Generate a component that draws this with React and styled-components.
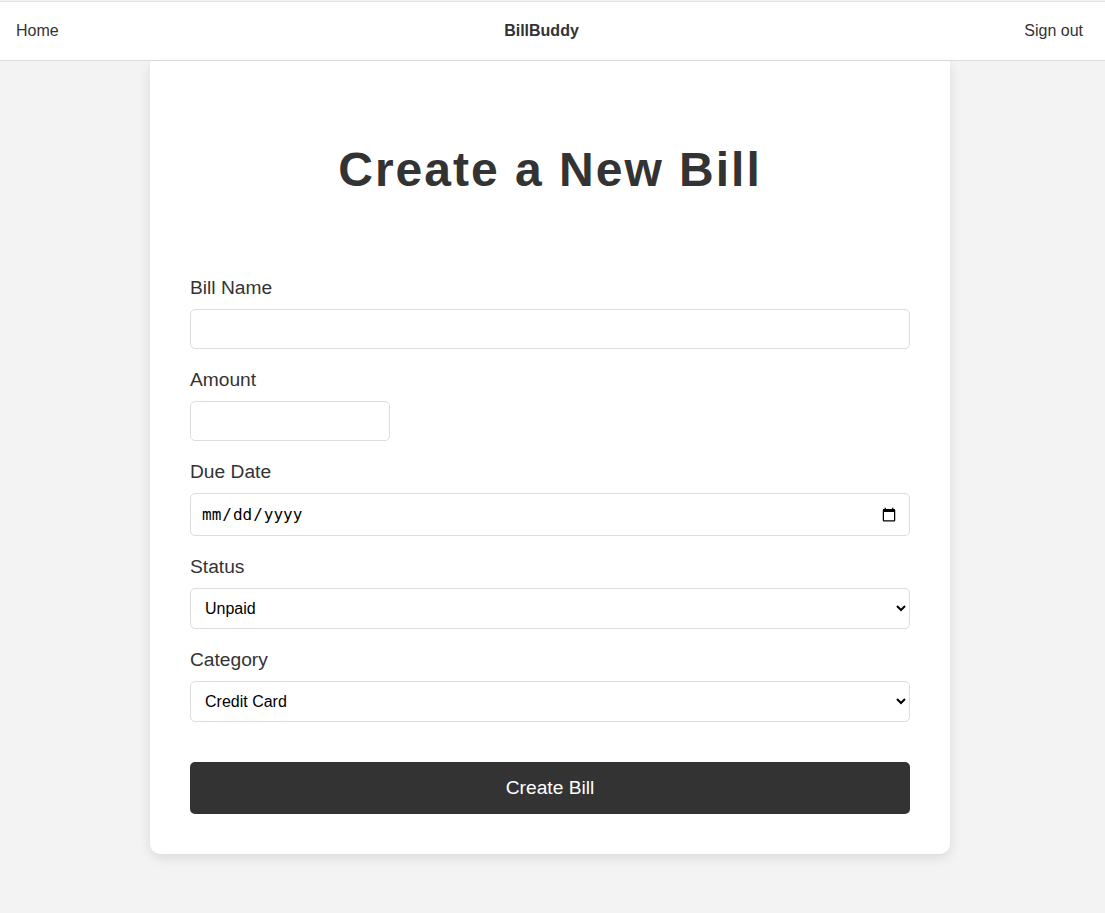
import React, { useState } from 'react'
import styled, { createGlobalStyle } from 'styled-components'

const GlobalStyle = createGlobalStyle`
  body {
    margin: 0;
    background: #f3f3f3;
    font-family: "Liberation Sans", Arial, sans-serif;
    color: #333;
  }
`

function App() {
  const [values, setValues] = useState({ name: '', amount: '', dueDate: '', status: 'Unpaid', category: 'Credit Card' })

  const handleChange = (e) => setValues({ ...values, [e.target.name]: e.target.value })

  return (
    <>
      <GlobalStyle />
      <NavBar>
        <NavLink href="#">Home</NavLink>
        <Brand>BillBuddy</Brand>
        <NavLink href="#">Sign out</NavLink>
      </NavBar>
      <Page>
        <Card>
          <Title>Create a New Bill</Title>
          <Form onSubmit={(e) => e.preventDefault()}>
            <Field>
              <Label>Bill Name</Label>
              <Input type="text" name="name" value={values.name} onChange={handleChange} />
            </Field>
            <Field>
              <Label>Amount</Label>
              <Input type="number" name="amount" $narrow value={values.amount} onChange={handleChange} />
            </Field>
            <Field>
              <Label>Due Date</Label>
              <DateInput type="date" name="dueDate" value={values.dueDate} onChange={handleChange} />
            </Field>
            <Field>
              <Label>Status</Label>
              <Select name="status" value={values.status} onChange={handleChange}>
                <option>Unpaid</option>
                <option>Paid</option>
              </Select>
            </Field>
            <Field>
              <Label>Category</Label>
              <Select name="category" value={values.category} onChange={handleChange}>
                <option>Credit Card</option>
                <option>Utilities</option>
                <option>Rent</option>
                <option>Other</option>
              </Select>
            </Field>
            <SubmitButton type="submit">Create Bill</SubmitButton>
          </Form>
        </Card>
      </Page>
    </>
  )
}

export default App

const NavBar = styled.nav`
  display: flex;
  justify-content: space-between;
  align-items: center;
  height: 58px;
  margin-top: 1px;
  padding: 0 22px 0 16px;
  background: #fff;
  border-top: 1px solid #e2e2e2;
  border-bottom: 1px solid #ddd;
  font-size: 16px;
`

const NavLink = styled.a`
  color: #333;
  text-decoration: none;
`

const Brand = styled.span`
  font-weight: bold;
  color: #333;
`

const Page = styled.div`
  padding-right: 5px;
  padding-bottom: 58px;
`

const Card = styled.main`
  width: 800px;
  box-sizing: border-box;
  margin: 0 auto;
  padding: 41px 40px 40px;
  background: #fff;
  border-radius: 0 0 10px 10px;
  box-shadow: 0 4px 12px rgba(0, 0, 0, 0.1);
`

const Title = styled.h1`
  margin: 40px 0 80px;
  text-align: center;
  font-size: 48px;
  letter-spacing: 2px;
  font-weight: bold;
  color: #333;
`

const Form = styled.form`
  display: flex;
  flex-direction: column;
`

const Field = styled.div`
  display: flex;
  flex-direction: column;
  align-items: flex-start;
  margin-bottom: 20px;
`

const Label = styled.label`
  font-size: 19.2px;
  line-height: 22px;
  margin-bottom: 10px;
  color: #333;
`

const Input = styled.input`
  box-sizing: border-box;
  width: ${(p) => (p.$narrow ? '200px' : '100%')};
  height: 40px;
  padding: 10px 14px;
  border: 1px solid #ddd;
  border-radius: 5px;
  font-family: "Liberation Sans", Arial, sans-serif;
  font-size: 16px;
  background: #fff;
`

const DateInput = styled(Input)`
  height: 43px;
  padding: 10px 10px;
  font-family: "DejaVu Sans Mono", monospace;
  font-size: 16px;
  color: #000;
`

const Select = styled.select`
  box-sizing: border-box;
  width: 100%;
  height: 41px;
  padding: 0 10px;
  border: 1px solid #ddd;
  border-radius: 5px;
  background: #fff;
  font-family: "Liberation Sans", Arial, sans-serif;
  font-size: 16px;
  color: #000;
`

const SubmitButton = styled.button`
  margin-top: 20px;
  height: 52px;
  border: none;
  border-radius: 5px;
  background: #333;
  color: #fff;
  font-family: "Liberation Sans", Arial, sans-serif;
  font-size: 19.2px;
  cursor: pointer;
`
